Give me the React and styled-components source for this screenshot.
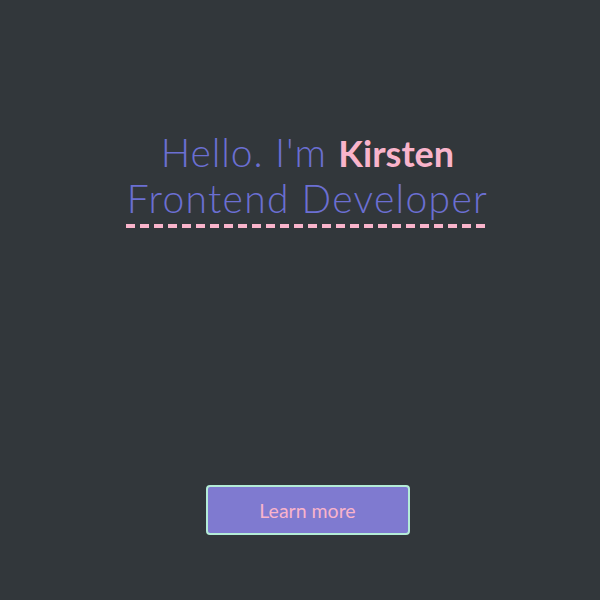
import React from 'react';
import styled, { createGlobalStyle } from 'styled-components';

const GlobalStyle = createGlobalStyle`
  body {
    margin: 0;
    background-color: #32373b;
  }
`;

const App = () => {
  return (
    <>
      <GlobalStyle />
      <Page>
        <Intro>
          <Line>
            Hello. I'm <Name>Kirsten</Name>
          </Line>
          <Role>Frontend Developer</Role>
        </Intro>
        <LearnButton>Learn more</LearnButton>
      </Page>
    </>
  );
};

const Page = styled.div`
  height: 600px;
  display: flex;
  flex-direction: column;
  align-items: center;
  box-sizing: border-box;
  padding: 130px 0 0 15px;
`;

const Intro = styled.div`
  display: flex;
  flex-direction: column;
  align-items: center;
  font-family: Lato, 'Liberation Sans', sans-serif;
  font-weight: 300;
  font-size: 39px;
  letter-spacing: 1.3px;
  line-height: 45px;
  color: #6b6fd2;
`;

const Line = styled.div`
  white-space: nowrap;
  letter-spacing: 0.9px;
`;

const Name = styled.span`
  font-weight: 700;
  font-size: 36px;
  letter-spacing: 0;
  color: #f9b4cb;
`;

const Role = styled.div`
  position: relative;
  white-space: nowrap;
  padding-bottom: 7px;

  &::after {
    content: '';
    position: absolute;
    left: -1px;
    right: -1px;
    bottom: 0;
    height: 4px;
    background-image: repeating-linear-gradient(
      to right,
      #f9b4cb 0,
      #f9b4cb 9px,
      transparent 9px,
      transparent 14px
    );
  }
`;

const LearnButton = styled.button`
  margin-top: 257px;
  width: 204px;
  height: 50px;
  border: 2px solid #b4ecd7;
  border-radius: 4px;
  background-color: #7f7ad0;
  color: #f9b4cb;
  font-family: Lato, 'Liberation Sans', sans-serif;
  font-size: 19.5px;
  cursor: pointer;
`;

export default App;
